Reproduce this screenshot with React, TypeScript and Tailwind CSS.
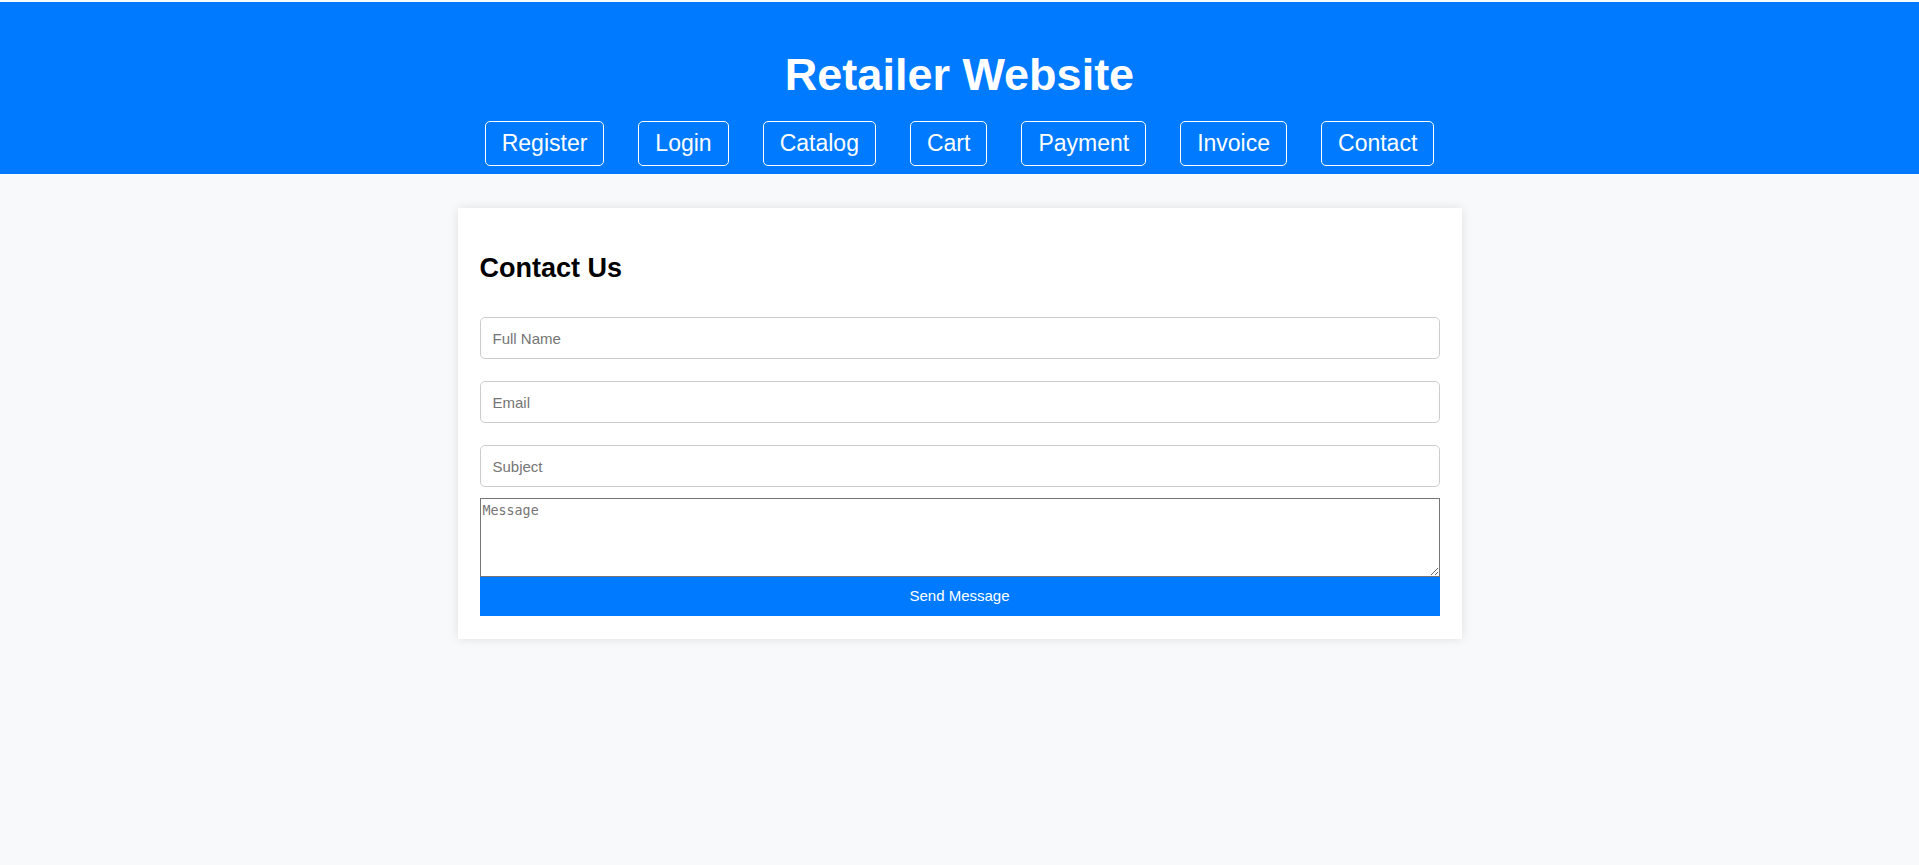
const links = ["Register", "Login", "Catalog", "Cart", "Payment", "Invoice", "Contact"];

export default function App() {
  return (
    <div
      className="min-h-screen bg-[#f8f9fa] pt-[2px]"
      style={{ fontFamily: '"Liberation Sans", Arial, sans-serif' }}
    >
      <header className="bg-[#007bff] pt-[48px] pb-[8px] text-center text-white">
        <h1 className="text-[45px] font-bold leading-[50px]">Retailer Website</h1>
        <nav className="mt-[21px] flex justify-center gap-[34px]">
          {links.map((l) => (
            <a
              key={l}
              href="#"
              className="h-[45px] rounded-[5px] border border-white px-[16px] py-[9px] text-[23px] leading-[25px] text-white"
            >
              {l}
            </a>
          ))}
        </nav>
      </header>

      <main className="pt-[34px]">
        <div className="mx-auto w-[1004px] bg-white px-[22px] pt-[22px] pb-[23px] shadow-[0_0_10px_rgba(0,0,0,0.1)]">
          <h2 className="mt-[23px] mb-[34px] text-[27px] font-bold leading-[30px] text-black">
            Contact Us
          </h2>
          <form className="flex flex-col" onSubmit={(e) => e.preventDefault()}>
            <input
              type="text"
              placeholder="Full Name"
              className="h-[42px] w-full rounded-[5px] border border-[#cccccc] px-[12px] text-[15px] outline-none placeholder:text-[#757575]"
            />
            <input
              type="email"
              placeholder="Email"
              className="mt-[22px] h-[42px] w-full rounded-[5px] border border-[#cccccc] px-[12px] text-[15px] outline-none placeholder:text-[#757575]"
            />
            <input
              type="text"
              placeholder="Subject"
              className="mt-[22px] h-[42px] w-full rounded-[5px] border border-[#cccccc] px-[12px] text-[15px] outline-none placeholder:text-[#757575]"
            />
            <textarea
              placeholder="Message"
              className="mt-[11px] h-[79px] w-full resize border border-[#767676] px-[2px] pt-[4px] text-[13.33px] leading-[16px] outline-none placeholder:text-[#757575]"
              style={{ fontFamily: '"DejaVu Sans Mono", "Liberation Mono", monospace' }}
            />
            <button
              type="submit"
              className="h-[39px] w-full bg-[#007bff] text-[15px] text-white"
            >
              Send Message
            </button>
          </form>
        </div>
      </main>
    </div>
  );
}
